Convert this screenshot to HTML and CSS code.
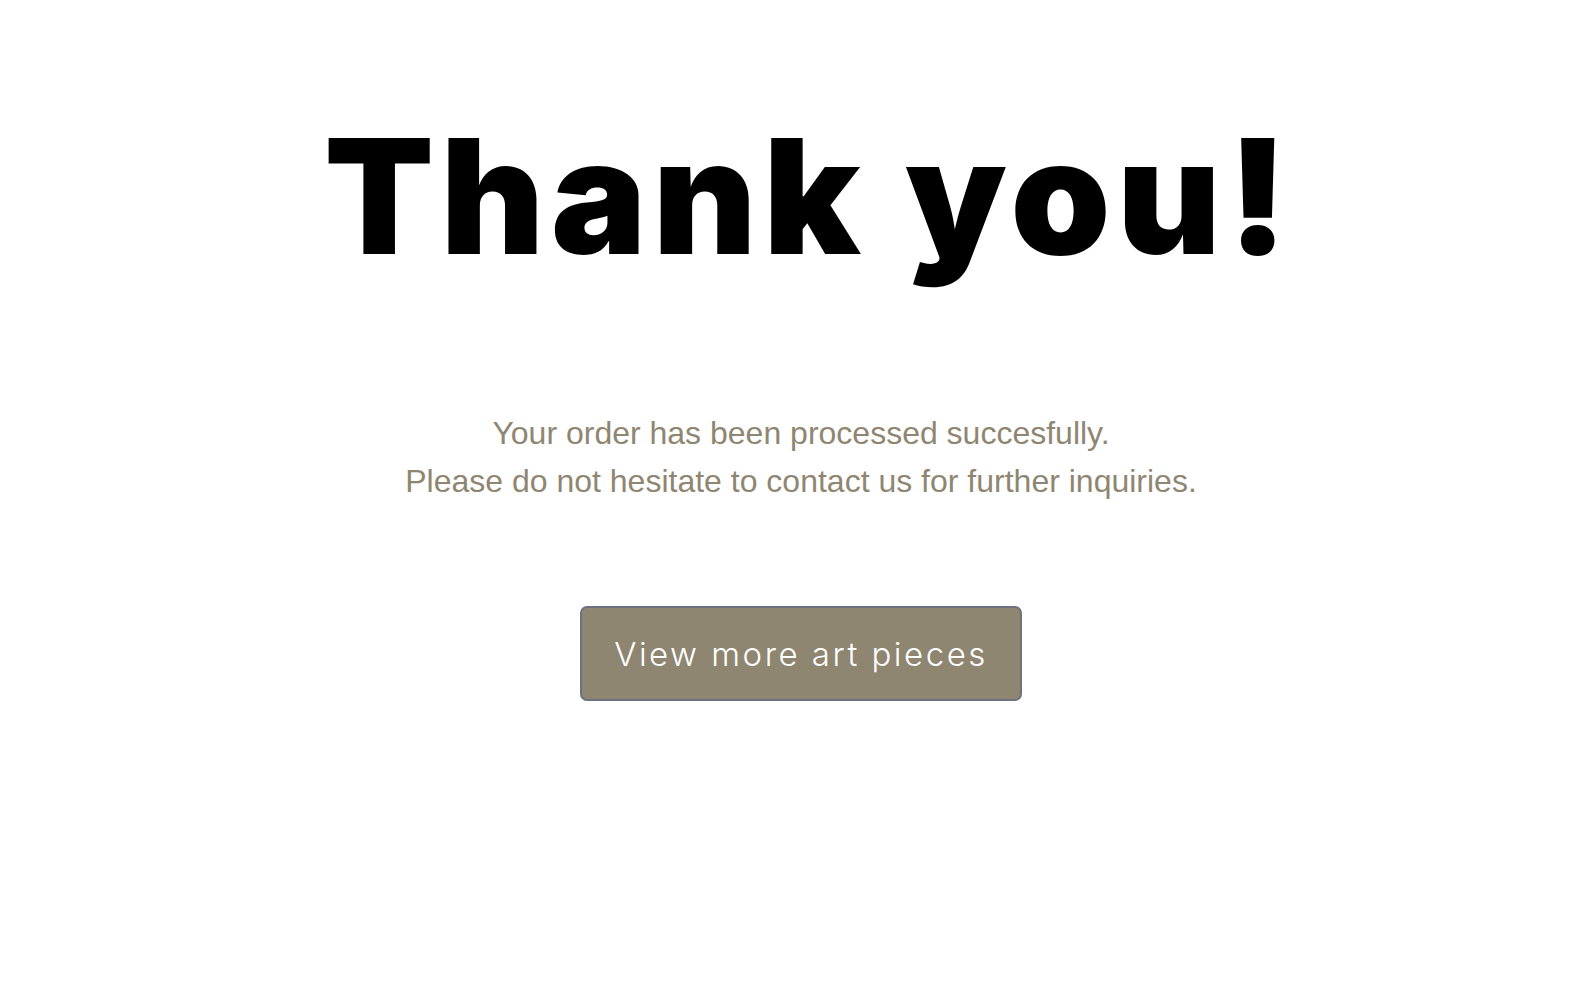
FILE: index.html
```html
<!DOCTYPE html>
<html lang="en">
<head>
<meta charset="utf-8">
<title>Thank you</title>
<link rel="stylesheet" href="styles.css">
</head>
<body>
<main class="page">
  <h1 class="title">Thank you!</h1>
  <p class="message">Your order has been processed succesfully.<br>Please do not hesitate to contact us for further inquiries.</p>
  <a class="button" href="#">View more art pieces</a>
</main>
</body>
</html>
```
FILE: styles.css
```css
html, body {
  margin: 0;
  padding: 0;
  background: #ffffff;
}
.page {
  display: flex;
  flex-direction: column;
  align-items: center;
  padding: 100px 0 0 14px;
}
.title {
  margin: 0;
  padding-left: 17px;
  font-family: "Inter", "Liberation Sans", sans-serif;
  font-weight: 900;
  font-size: 160px;
  line-height: 1.2;
  letter-spacing: 6.45px;
  color: #000000;
}
.message {
  margin: 117px 0 0;
  font-family: "Liberation Sans", Arial, sans-serif;
  font-size: 32px;
  line-height: 48px;
  color: #8f8672;
  text-align: center;
}
.button {
  margin-top: 101px;
  box-sizing: border-box;
  width: 442px;
  height: 95px;
  display: flex;
  align-items: center;
  justify-content: center;
  background: #8f8672;
  border: 2px solid #6e7280;
  border-radius: 7px;
  font-family: "Inter", sans-serif;
  font-weight: 300;
  font-size: 33px;
  color: #ffffff;
  text-decoration: none;
  letter-spacing: 2.5px;
}
```
